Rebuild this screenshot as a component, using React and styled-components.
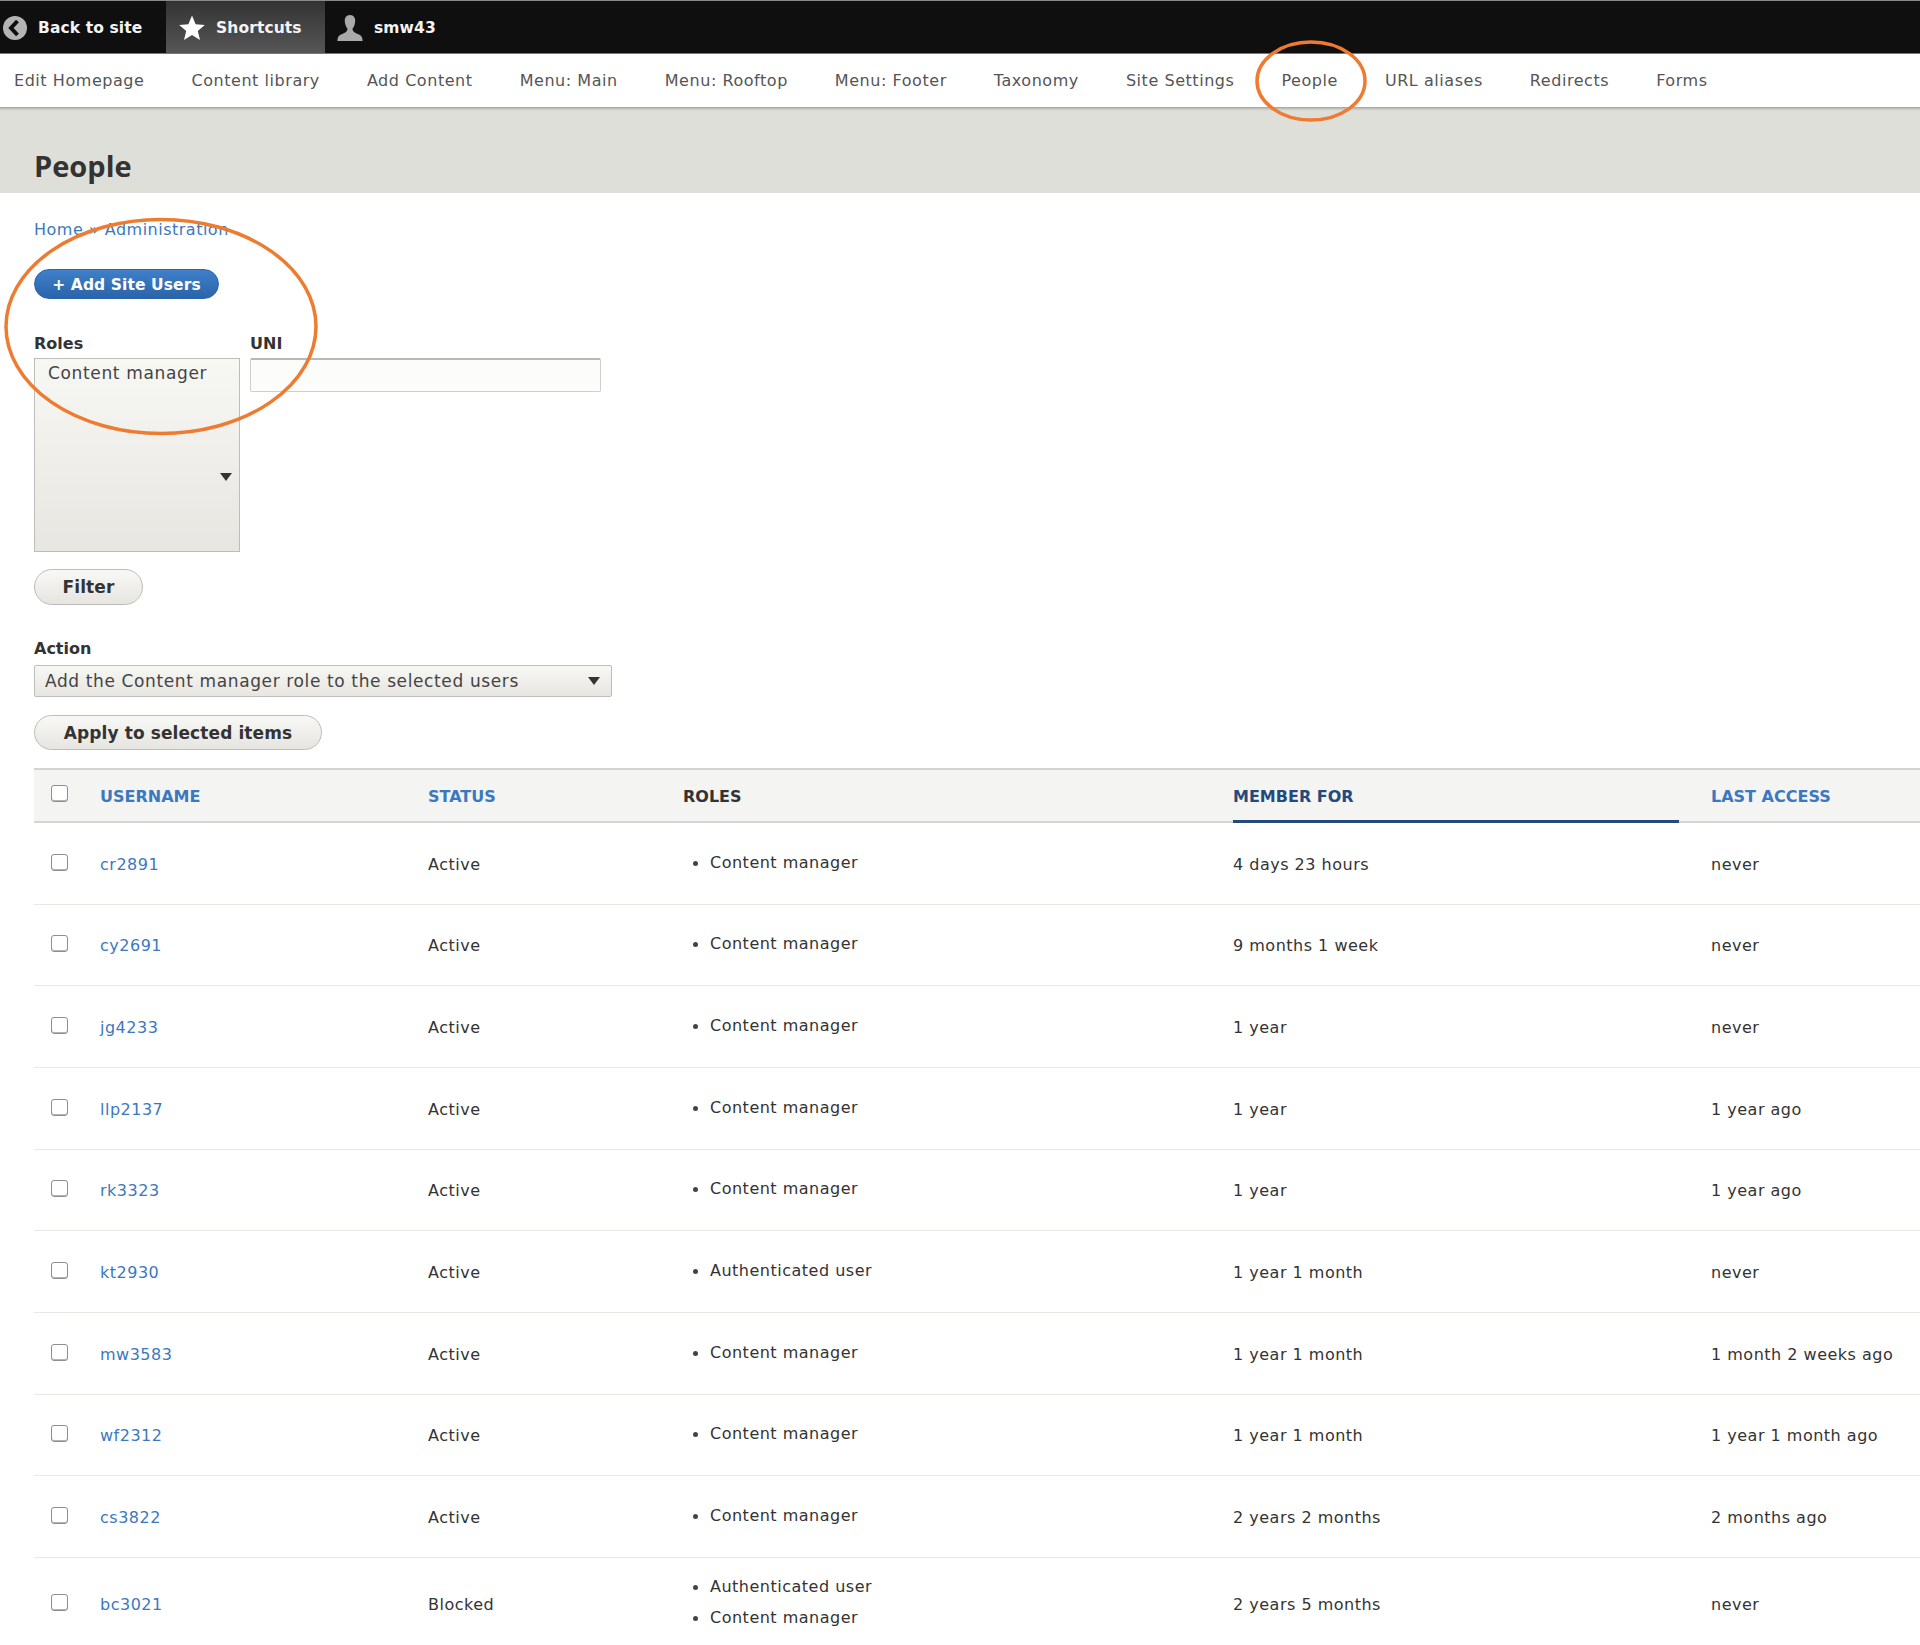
import React from "react";
import styled, { createGlobalStyle } from "styled-components";

const GlobalStyle = createGlobalStyle`
  html, body {
    margin: 0;
    padding: 0;
    background: #fff;
    overflow: hidden;
  }
  body {
    font-family: "DejaVu Sans", "Liberation Sans", sans-serif;
    font-size: 16px;
    letter-spacing: 0.5px;
    color: #333;
  }
`;

const Page = styled.div`
  position: relative;
  width: 1920px;
  height: 1645px;
  overflow: hidden;
`;

const Toolbar = styled.div`
  display: flex;
  height: 54px;
  box-sizing: border-box;
  background: #0f0f0f;
  border-top: 1px solid #8a8a8a;
  border-bottom: 1px solid #777;
`;

const ToolbarItem = styled.a`
  display: flex;
  align-items: center;
  gap: ${(p) => p.$gap || 11}px;
  width: ${(p) => p.$width}px;
  box-sizing: border-box;
  padding-left: ${(p) => p.$pad}px;
  padding-top: 2px;
  color: #f4f4f4;
  font-size: 15.5px;
  font-weight: 700;
  letter-spacing: 0.1px;
  background: ${(p) => (p.$active ? "linear-gradient(#333, #565656)" : "none")};
`;

const Tabs = styled.nav`
  display: flex;
  align-items: center;
  gap: 47px;
  height: 53px;
  padding-left: 14px;
  background: #fff;
`;

const Tab = styled.a`
  color: #555;
  font-size: 16px;
  letter-spacing: 0.55px;
`;

const PageHead = styled.header`
  height: 86px;
  box-sizing: border-box;
  padding: 42px 0 0 34px;
  background: linear-gradient(#a0a09c 0, #c9c9c4 2px, #dfdfd9 4px);
`;

const Title = styled.h1`
  margin: 0;
  font-size: 29px;
  line-height: 34px;
  font-weight: 700;
  letter-spacing: 0;
  font-family: "Open Sans", "DejaVu Sans", sans-serif;
  color: #333;
`;

const Content = styled.main`
  padding: 25px 0 0 34px;
`;

const Breadcrumb = styled.div`
  line-height: 24px;
  font-size: 16px;
  color: #3b78c0;
`;

const Crumb = styled.a`
  color: #3b78c0;
`;

const AddButton = styled.a`
  display: inline-flex;
  align-items: center;
  justify-content: center;
  width: 185px;
  height: 30px;
  margin-top: 27px;
  padding-top: 1px;
  box-sizing: border-box;
  border: 1px solid #2d66ab;
  border-radius: 15px;
  background: linear-gradient(#3f80c8, #2a64ab);
  color: #fff;
  font-size: 15.5px;
  font-weight: 600;
  letter-spacing: 0.1px;
`;

const Filters = styled.div`
  display: flex;
  align-items: flex-start;
  gap: 10px;
  margin-top: 33px;
`;

const Field = styled.div`
  display: flex;
  flex-direction: column;
`;

const Label = styled.label`
  line-height: 24px;
  margin-bottom: ${(p) => p.$gap || 2}px;
  font-size: 16px;
  font-weight: 700;
  letter-spacing: 0;
  color: #333;
`;

const RoleSelect = styled.div`
  position: relative;
  width: 206px;
  height: 194px;
  box-sizing: border-box;
  padding: 1px 0 0 13px;
  border: 1px solid #bdbdb9;
  background: linear-gradient(#f7f7f4, #e7e6e1);
  line-height: 26px;
  font-size: 17px;
  letter-spacing: 0.65px;
  color: #444;
`;

const Arrow = styled.span`
  position: absolute;
  right: ${(p) => p.$right}px;
  top: ${(p) => p.$top};
  width: 0;
  height: 0;
  border-left: 6px solid transparent;
  border-right: 6px solid transparent;
  border-top: 8px solid #333;
`;

const TextInput = styled.input`
  width: 351px;
  height: 34px;
  box-sizing: border-box;
  border: 1px solid #cfcfcb;
  border-top: 2px solid #b8b8b5;
  border-radius: 2px;
  background: #fcfcfa;
  outline: none;
`;

const Button = styled.button`
  display: block;
  width: ${(p) => p.$width}px;
  height: ${(p) => p.$height}px;
  margin-top: ${(p) => p.$top}px;
  padding: 0;
  border: 1px solid #bdbdb9;
  border-radius: 18px;
  background: linear-gradient(#f8f8f6, #e6e5e0);
  font-family: inherit;
  font-size: 17px;
  font-weight: 600;
  letter-spacing: 0.1px;
  color: #333;
`;

const ActionSection = styled.section`
  margin-top: 32px;
`;

const ActionSelect = styled.div`
  position: relative;
  width: 578px;
  height: 32px;
  box-sizing: border-box;
  padding-left: 10px;
  border: 1px solid #bdbdb9;
  border-radius: 2px;
  background: linear-gradient(#f7f7f4, #e7e6e1);
  line-height: 30px;
  font-size: 17px;
  letter-spacing: 0.62px;
  color: #444;
`;

const Table = styled.div`
  margin-top: 18px;
`;

const columns = "66px 328px 255px 550px 478px 1fr";

const HeadRow = styled.div`
  display: grid;
  grid-template-columns: ${columns};
  height: 55px;
  box-sizing: border-box;
  padding-top: 2px;
  background: #f4f4f2;
  border-top: 2px solid #d4d4d0;
  border-bottom: 2px solid #d4d4d0;
`;

const HeadCell = styled.div`
  display: flex;
  align-items: center;
  box-sizing: border-box;
  margin-bottom: ${(p) => (p.$sorted ? "-2px" : "0")};
  margin-right: ${(p) => (p.$sorted ? "32px" : "0")};
  border-bottom: ${(p) => (p.$sorted ? "3px solid #24497a" : "0")};
  font-size: 16px;
  font-weight: 700;
  letter-spacing: 0;
  color: ${(p) => (p.$sorted ? "#24497a" : p.$plain ? "#333" : "#3b78c0")};
`;

const Row = styled.div`
  display: grid;
  grid-template-columns: ${columns};
  align-items: center;
  height: ${(p) => (p.$tall ? "92px" : "81.67px")};
  box-sizing: border-box;
  padding-top: 2px;
  border-bottom: 1px solid #e8e8e4;
  font-size: 16px;
  color: #333;
`;

const CheckCell = styled.div`
  display: flex;
  align-items: center;
  padding-left: 17px;
  margin-top: ${(p) => (p.$head ? "-7px" : "-4px")};
`;

const Checkbox = styled.input`
  appearance: none;
  width: 17px;
  height: 17px;
  margin: 0;
  box-sizing: border-box;
  border: 1px solid #8e8e8e;
  border-radius: 3px;
  background: #fff;
  box-shadow: inset 0 -1px 0 #b5b5b5;
`;

const UserLink = styled.a`
  color: #3b78c0;
`;

const RoleList = styled.ul`
  display: flex;
  flex-direction: column;
  gap: 12px;
  margin: -4px 0 0;
  padding: 0 0 0 27px;
  list-style: none;
`;

const RoleItem = styled.li`
  position: relative;
  line-height: 19px;
  &::before {
    content: "";
    position: absolute;
    left: -17px;
    top: 8px;
    width: 5px;
    height: 5px;
    border-radius: 50%;
    background: #444;
  }
`;

const Annotation = styled.svg`
  position: absolute;
  left: 0;
  top: 0;
  pointer-events: none;
`;

const BackIcon = () => (
  <svg width="24" height="24" viewBox="0 0 24 24" style={{ marginLeft: 3 }}>
    <circle cx="12" cy="12" r="12" fill="#b4b4b4" />
    <path d="M14.5 5 L8 12 L14.5 19" fill="none" stroke="#0f0f0f" strokeWidth="4" />
  </svg>
);

const StarIcon = () => (
  <svg width="26" height="26" viewBox="0 0 26 26">
    <path d="M13 0.5 L16.6 9.2 L25.8 9.9 L18.8 15.9 L21 25 L13 20.1 L5 25 L7.2 15.9 L0.2 9.9 L9.4 9.2 Z" fill="#fff" />
  </svg>
);

const UserIcon = () => (
  <svg width="26" height="26" viewBox="0 0 26 26">
    <path d="M13 0 C9 0 7.6 3 7.8 6.6 C8 10 9.4 12.4 10.4 13.6 C10.8 16.6 8 18 4 19.6 C1.4 20.6 0.6 22.4 0.4 26 L25.6 26 C25.4 22.4 24.6 20.6 22 19.6 C18 18 15.2 16.6 15.6 13.6 C16.6 12.4 18 10 18.2 6.6 C18.4 3 17 0 13 0 Z" fill="#a9a9a9" />
  </svg>
);

const tabs = [
  "Edit Homepage",
  "Content library",
  "Add Content",
  "Menu: Main",
  "Menu: Rooftop",
  "Menu: Footer",
  "Taxonomy",
  "Site Settings",
  "People",
  "URL aliases",
  "Redirects",
  "Forms",
];

const users = [
  { name: "cr2891", status: "Active", roles: ["Content manager"], member: "4 days 23 hours", last: "never" },
  { name: "cy2691", status: "Active", roles: ["Content manager"], member: "9 months 1 week", last: "never" },
  { name: "jg4233", status: "Active", roles: ["Content manager"], member: "1 year", last: "never" },
  { name: "llp2137", status: "Active", roles: ["Content manager"], member: "1 year", last: "1 year ago" },
  { name: "rk3323", status: "Active", roles: ["Content manager"], member: "1 year", last: "1 year ago" },
  { name: "kt2930", status: "Active", roles: ["Authenticated user"], member: "1 year 1 month", last: "never" },
  { name: "mw3583", status: "Active", roles: ["Content manager"], member: "1 year 1 month", last: "1 month 2 weeks ago" },
  { name: "wf2312", status: "Active", roles: ["Content manager"], member: "1 year 1 month", last: "1 year 1 month ago" },
  { name: "cs3822", status: "Active", roles: ["Content manager"], member: "2 years 2 months", last: "2 months ago" },
  { name: "bc3021", status: "Blocked", roles: ["Authenticated user", "Content manager"], member: "2 years 5 months", last: "never" },
];

export default function App() {
  return (
    <Page>
      <GlobalStyle />
      <Toolbar>
        <ToolbarItem $width={166} $pad={0}>
          <BackIcon />
          Back to site
        </ToolbarItem>
        <ToolbarItem $width={159} $pad={13} $active>
          <StarIcon />
          Shortcuts
        </ToolbarItem>
        <ToolbarItem $pad={12}>
          <UserIcon />
          smw43
        </ToolbarItem>
      </Toolbar>
      <Tabs>
        {tabs.map((tab) => (
          <Tab key={tab}>{tab}</Tab>
        ))}
      </Tabs>
      <PageHead>
        <Title>People</Title>
      </PageHead>
      <Content>
        <Breadcrumb>
          <Crumb>Home</Crumb> » <Crumb>Administration</Crumb>
        </Breadcrumb>
        <AddButton>+ Add Site Users</AddButton>
        <Filters>
          <Field>
            <Label>Roles</Label>
            <RoleSelect>
              Content manager
              <Arrow $right={7} $top="114px" />
            </RoleSelect>
          </Field>
          <Field>
            <Label>UNI</Label>
            <TextInput />
          </Field>
        </Filters>
        <Button $width={109} $height={36} $top={17}>Filter</Button>
        <ActionSection>
          <Field>
            <Label $gap={4}>Action</Label>
            <ActionSelect>
              Add the Content manager role to the selected users
              <Arrow $right={11} $top="11px" />
            </ActionSelect>
          </Field>
        </ActionSection>
        <Button $width={288} $height={35} $top={18}>Apply to selected items</Button>
        <Table>
          <HeadRow>
            <CheckCell $head>
              <Checkbox type="checkbox" />
            </CheckCell>
            <HeadCell>USERNAME</HeadCell>
            <HeadCell>STATUS</HeadCell>
            <HeadCell $plain>ROLES</HeadCell>
            <HeadCell $sorted>MEMBER FOR</HeadCell>
            <HeadCell>LAST ACCESS</HeadCell>
          </HeadRow>
          {users.map((user) => (
            <Row key={user.name} $tall={user.roles.length > 1}>
              <CheckCell>
                <Checkbox type="checkbox" />
              </CheckCell>
              <UserLink>{user.name}</UserLink>
              <div>{user.status}</div>
              <RoleList>
                {user.roles.map((role) => (
                  <RoleItem key={role}>{role}</RoleItem>
                ))}
              </RoleList>
              <div>{user.member}</div>
              <div>{user.last}</div>
            </Row>
          ))}
        </Table>
      </Content>
      <Annotation width="1920" height="1645">
        <ellipse cx="1311" cy="81" rx="54" ry="39" fill="none" stroke="#ee7b30" strokeWidth="3.5" />
        <ellipse cx="161" cy="326.5" rx="155" ry="107" fill="none" stroke="#ee7b30" strokeWidth="3.5" />
      </Annotation>
    </Page>
  );
}
